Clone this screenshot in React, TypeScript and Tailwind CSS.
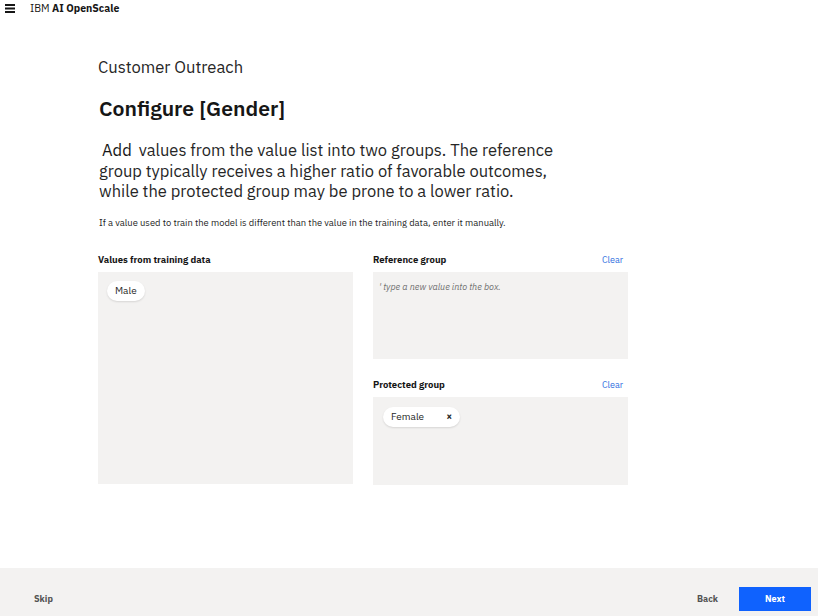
import React from "react";

const font = { fontFamily: '"IBM Plex Sans", "Open Sans", "Noto Sans", sans-serif' };

function Chip({ label, close }: { label: string; close?: boolean }) {
  return (
    <div className="inline-flex items-center h-[20px] rounded-full bg-white shadow-[0_1px_2px_rgba(0,0,0,0.12)] px-[8px] text-[10px] text-[#262626]">
      <span>{label}</span>
      {close && <span className="ml-[22px] text-[10px] font-bold leading-none">×</span>}
    </div>
  );
}

export default function App() {
  return (
    <div className="w-[818px] h-[616px] bg-white flex flex-col text-[#161616]" style={font}>
      <div className="h-[16px] flex items-center pl-[5px] shrink-0">
        <svg width="10" height="9" viewBox="0 0 10 9">
          <rect x="0" y="0" width="10" height="2" fill="#161616" />
          <rect x="0" y="3.5" width="10" height="2" fill="#161616" />
          <rect x="0" y="7" width="10" height="2" fill="#161616" />
        </svg>
        <span className="ml-[15px] text-[10.5px] leading-none">
          IBM <span className="font-bold">AI OpenScale</span>
        </span>
      </div>
      <div className="flex-1 pl-[98px] pt-[41px]">
        <div className="text-[16.6px] leading-[20px] text-[#262626]">Customer Outreach</div>
        <div className="mt-[18px] text-[21.2px] leading-[26px] font-semibold ml-[1px]">Configure [Gender]</div>
        <div className="mt-[19px] whitespace-nowrap text-[16.5px] leading-[20.5px] text-[#262626] ml-[1px]">
          <span className="bg-white px-[3px] mr-[4px] text-[#161616]">Add</span>
          values from the value list into two groups. The reference
          <br />
          group typically receives a higher ratio of favorable outcomes,
          <br />
          while the protected group may be prone to a lower ratio.
        </div>
        <div className="mt-[15px] text-[9.4px] leading-[12px] text-[#262626] ml-[1px]">
          If a value used to train the model is different than the value in the training data, enter it manually.
        </div>
        <div className="mt-[25px] flex gap-[20px]">
          <div className="w-[255px] flex flex-col">
            <div className="h-[20px] text-[9.5px] font-bold leading-[12px]">Values from training data</div>
            <div className="mt-[-2px] h-[212px] bg-[#f3f2f1] pt-[9px] pl-[9px] flex items-start">
              <Chip label="Male" />
            </div>
          </div>
          <div className="w-[255px] flex flex-col">
            <div className="h-[20px] flex justify-between text-[9.5px] leading-[12px]">
              <span className="font-bold">Reference group</span>
              <span className="text-[#2f6fe0] text-[9px] mr-[5px]">Clear</span>
            </div>
            <div className="mt-[-2px] h-[87px] bg-[#f3f2f1] pt-[8px] pl-[6px] text-[9px] italic text-[#6f6f6f]">
              ' type a new value into the box.
            </div>
            <div className="mt-[20px] h-[20px] flex justify-between text-[9.5px] leading-[12px]">
              <span className="font-bold">Protected group</span>
              <span className="text-[#2f6fe0] text-[9px] mr-[5px]">Clear</span>
            </div>
            <div className="mt-[-2px] h-[88px] bg-[#f3f2f1] pt-[10px] pl-[10px] flex items-start">
              <Chip label="Female" close />
            </div>
          </div>
        </div>
      </div>
      <div className="h-[48px] shrink-0 bg-[#f3f2f1] flex items-center pl-[34px] pr-[7px] pt-[13px]">
        <span className="text-[9px] font-bold text-[#525252]">Skip</span>
        <div className="flex-1" />
        <span className="text-[9px] font-bold text-[#525252] mr-[21px]">Back</span>
        <div className="w-[72px] h-[24px] bg-[#0f62fe] flex items-center justify-center text-white text-[9px] font-bold">
          Next
        </div>
      </div>
    </div>
  );
}
